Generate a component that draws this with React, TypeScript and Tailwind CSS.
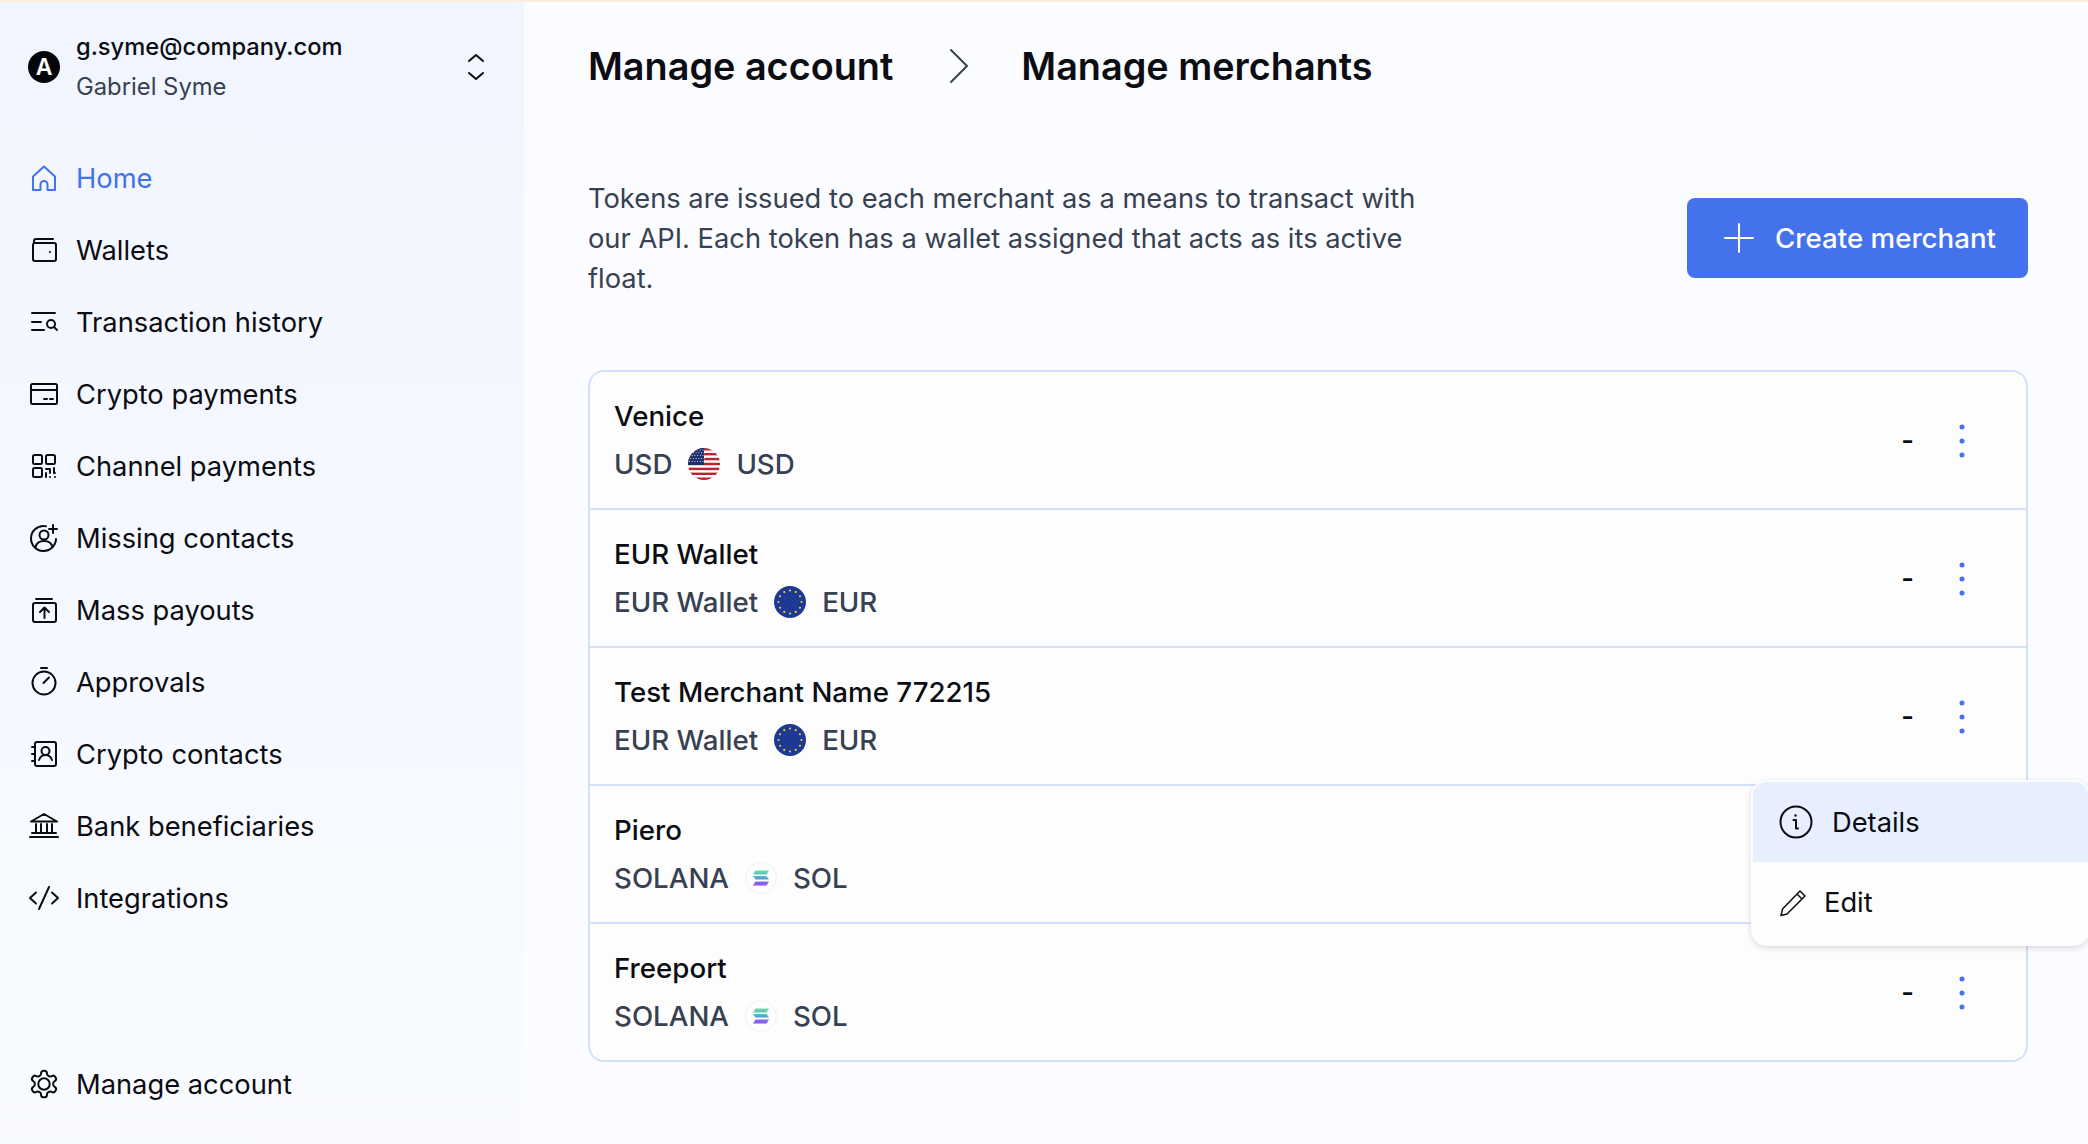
import React from "react";

const S = ({ children, color = "#0b0d12" }: { children: React.ReactNode; color?: string }) => (
  <svg width="32" height="32" viewBox="0 0 32 32" fill="none" stroke={color} strokeWidth="2" strokeLinecap="round" strokeLinejoin="round" className="shrink-0">
    {children}
  </svg>
);

const icons: Record<string, React.ReactNode> = {
  home: <path d="M5 14.5 16 4.5l11 10V28h-7.5v-5.5a3.5 3.5 0 0 0-7 0V28H5z" />,
  wallet: (
    <>
      <rect x="5" y="9" width="23" height="18" rx="2" />
      <path d="M6 9V7a2 2 0 0 1 2-2h17" />
      <circle cx="22" cy="18" r="1" fill="#0b0d12" stroke="none" />
    </>
  ),
  tx: (
    <>
      <path d="M4 7h23M4 16h9M4 24h12" />
      <circle cx="23" cy="18" r="4" />
      <path d="m26 21 3 3" />
    </>
  ),
  card: (
    <>
      <rect x="3" y="6" width="26" height="20" rx="1.5" />
      <path d="M3 12h26M16 21h3M22 21h3" />
    </>
  ),
  qr: (
    <>
      <rect x="5" y="5" width="9" height="9" rx="1.5" />
      <rect x="18" y="5" width="9" height="9" rx="1.5" />
      <rect x="5" y="18" width="9" height="9" rx="1.5" />
      <path d="M18 19h4v4M18 23v4M22 27h0M26 18v5h1M27 27h0" />
    </>
  ),
  contact: (
    <>
      <path d="M28 17A12.5 12.5 0 1 1 16 4a12 12 0 0 1 2 .2" />
      <circle cx="16" cy="13" r="4.5" />
      <path d="M7.5 25c1-4 4.500-6 8.500-6s7.500 2 8.500 6M25 3v8M21 7h8" />
    </>
  ),
  payout: (
    <>
      <path d="M8 5h16" />
      <rect x="5" y="9" width="23" height="19" rx="2" />
      <path d="M16.500 24V14M12 18l4.500-4.500L21 18" />
    </>
  ),
  timer: (
    <>
      <circle cx="16" cy="17" r="11.500" />
      <path d="M13 2h6M15.500 17l5.500-5.500" />
    </>
  ),
  book: (
    <>
      <rect x="7" y="4" width="21" height="24" rx="2" />
      <path d="M4 9h3M4 16h3M4 23h3" />
      <circle cx="17.500" cy="13" r="4" />
      <path d="M11 22c1-3 3.500-5 6.500-5s5.500 2 6.500 5" />
    </>
  ),
  bank: (
    <>
      <path d="M3 11.500 16 4l13 7.500z" />
      <path d="M8 14v8M13 14v8M19 14v8M24 14v8M4 23h24M2 27h28" />
    </>
  ),
  code: <path d="M8 10.500 2 16l6 5.500M24 10.500l6 5.500-6 5.500M21 5l-10 22" />,
};

const GEAR =
  "M12.22 2h-.44a2 2 0 0 0-2 2v.18a2 2 0 0 1-1 1.73l-.43.25a2 2 0 0 1-2 0l-.15-.08a2 2 0 0 0-2.73.73l-.22.38a2 2 0 0 0 .73 2.73l.15.1a2 2 0 0 1 1 1.72v.51a2 2 0 0 1-1 1.74l-.15.09a2 2 0 0 0-.73 2.73l.22.38a2 2 0 0 0 2.73.73l.15-.08a2 2 0 0 1 2 0l.43.25a2 2 0 0 1 1 1.73V20a2 2 0 0 0 2 2h.44a2 2 0 0 0 2-2v-.18a2 2 0 0 1 1-1.73l.43-.25a2 2 0 0 1 2 0l.15.08a2 2 0 0 0 2.73-.73l.22-.39a2 2 0 0 0-.73-2.73l-.15-.08a2 2 0 0 1-1-1.74v-.5a2 2 0 0 1 1-1.74l.15-.09a2 2 0 0 0 .73-2.73l-.22-.38a2 2 0 0 0-2.73-.73l-.15.08a2 2 0 0 1-2 0l-.43-.25a2 2 0 0 1-1-1.73V4a2 2 0 0 0-2-2z";

const Gear = () => (
  <svg width="32" height="32" viewBox="0 0 24 24" fill="none" stroke="#0b0d12" strokeWidth="1.5" strokeLinecap="round" strokeLinejoin="round" className="shrink-0">
    <path d={GEAR} />
    <circle cx="12" cy="12" r="4.300" />
  </svg>
);

const nav = [
  ["home", "Home"],
  ["wallet", "Wallets"],
  ["tx", "Transaction history"],
  ["card", "Crypto payments"],
  ["qr", "Channel payments"],
  ["contact", "Missing contacts"],
  ["payout", "Mass payouts"],
  ["timer", "Approvals"],
  ["book", "Crypto contacts"],
  ["bank", "Bank beneficiaries"],
  ["code", "Integrations"],
];

const Usa = () => {
  const stripes = [];
  for (let i = 0; i < 7; i++) stripes.push(<rect key={i} x="0" y={i * 4.92} width="32" height="2.460" fill="#b92535" />);
  const dots = [];
  for (let r = 0; r < 5; r++) for (let c = 0; c < 6; c++) dots.push(<circle key={`${r}${c}`} cx={1.500 + c * 2.700 + (r % 2) * 1.200} cy={2 + r * 2.800} r="0.500" fill="#fff" />);
  return (
    <svg width="32" height="32" viewBox="0 0 32 32" className="shrink-0">
      <clipPath id="usa"><circle cx="16" cy="16" r="16" /></clipPath>
      <g clipPath="url(#usa)">
        <rect width="32" height="32" fill="#fff" />
        {stripes}
        <rect width="16" height="17" fill="#20306f" />
        {dots}
      </g>
    </svg>
  );
};

const Eur = () => {
  const stars = [];
  for (let i = 0; i < 12; i++) {
    const a = (i * Math.PI) / 6;
    stars.push(<circle key={i} cx={16 + 11.500 * Math.cos(a)} cy={16 + 11.500 * Math.sin(a)} r="1.100" fill="#f2c832" />);
  }
  return (
    <svg width="32" height="32" viewBox="0 0 32 32" className="shrink-0">
      <circle cx="16" cy="16" r="16" fill="#1c3a94" />
      {stars}
    </svg>
  );
};

const Sol = () => (
  <svg width="32" height="32" viewBox="0 0 32 32" className="shrink-0">
    <defs>
      <linearGradient id="sol" x1="0" y1="0" x2="0" y2="1">
        <stop offset="0" stopColor="#5fe3a8" />
        <stop offset="0.5" stopColor="#58a8c8" />
        <stop offset="1" stopColor="#9945ff" />
      </linearGradient>
    </defs>
    <circle cx="16" cy="16" r="15.500" fill="#fdfdfe" stroke="#eef0f6" />
    <path fill="url(#sol)" d="M10.500 8.500h13.500l-2.500 4H8zM8 14h13.500l2.500 3.600H10.500zM10.500 19.500H24L21.500 23.500H8z" />
  </svg>
);

const Dots = () => (
  <svg width="32" height="36" viewBox="0 0 32 36" className="shrink-0" fill="#4472ec">
    <circle cx="16" cy="4" r="2.500" />
    <circle cx="16" cy="18" r="2.500" />
    <circle cx="16" cy="32" r="2.500" />
  </svg>
);

const rows: [string, string, React.ReactNode, string][] = [
  ["Venice", "USD", <Usa />, "USD"],
  ["EUR Wallet", "EUR Wallet", <Eur />, "EUR"],
  ["Test Merchant Name 772215", "EUR Wallet", <Eur />, "EUR"],
  ["Piero", "SOLANA", <Sol />, "SOL"],
  ["Freeport", "SOLANA", <Sol />, "SOL"],
];

export default function App() {
  return (
    <div className="flex h-[1144px] w-full flex-col overflow-hidden bg-[#fbfcff] text-[27.3px] text-[#0b0d12] font-['Inter',sans-serif]">
      <div className="h-[2px] shrink-0 bg-[#fdeedc]" />
      <div className="relative flex min-h-0 flex-1">
        <aside className="flex w-[524px] shrink-0 flex-col bg-gradient-to-b from-[#f1f5ff] to-[#f9fbff] pb-[24px]">
          <div className="flex h-[140px] shrink-0 items-start pl-[28px] pr-[36px] pt-[25px]">
            <div className="flex h-[80px] w-full items-center justify-between">
              <div className="flex items-center gap-[16px]">
                <div className="flex h-[32px] w-[32px] items-center justify-center rounded-full bg-[#05060a] text-[23px] font-semibold leading-none text-white">A</div>
                <div>
                  <div className="text-[23.7px] font-medium leading-[40px]">g.syme@company.com</div>
                  <div className="text-[23.8px] leading-[40px] text-[#374151]">Gabriel Syme</div>
                </div>
              </div>
              <svg width="24" height="32" viewBox="0 0 24 32" fill="none" stroke="#0b0d12" strokeWidth="2" strokeLinecap="round" strokeLinejoin="round">
                <path d="m5 10 7-6 7 6M5 22l7 6 7-6" />
              </svg>
            </div>
          </div>
          <nav className="flex flex-col">
            {nav.map(([k, label], i) => (
              <div key={k} className={`flex h-[72px] items-center gap-[16px] pl-[28px] ${i === 0 ? "text-[#4472ec]" : ""}`}>
                <S color={i === 0 ? "#4472ec" : "#0b0d12"}>{icons[k]}</S>
                <span className="pt-[2px]">{label}</span>
              </div>
            ))}
          </nav>
          <div className="mt-auto flex h-[72px] items-center gap-[16px] pl-[28px]">
            <Gear />
            <span className="pt-[2px]">Manage account</span>
          </div>
        </aside>

        <main className="min-w-0 flex-1 pl-[64px] pr-[60px] pt-[32px]">
          <div className="flex h-[64px] items-center text-[37.8px] font-semibold">
            <span>Manage account</span>
            <svg width="32" height="40" viewBox="0 0 32 40" fill="none" stroke="#374151" strokeWidth="2" strokeLinecap="round" strokeLinejoin="round" className="ml-[51px] mr-[45px]">
              <path d="m7 4 16 16L7 36" />
            </svg>
            <span>Manage merchants</span>
          </div>

          <div className="mt-[80px] flex items-center justify-between">
            <p className="-mb-[1px] w-[850px] pt-[1px] leading-[40px] text-[#374151]">
              Tokens are issued to each merchant as a means to transact with our API. Each token has a wallet assigned that acts as its active float.
            </p>
            <button className="flex h-[80px] w-[341px] items-center gap-[21px] rounded-[8px] bg-[#4472ec] pl-[37px] text-[27.7px] font-medium text-white">
              <svg width="30" height="30" viewBox="0 0 30 30" fill="none" stroke="#fff" strokeWidth="2" strokeLinecap="round">
                <path d="M15 1v28M1 15h28" />
              </svg>
              <span className="pt-[2px]">Create merchant</span>
            </button>
          </div>

          <div className="mt-[72px] divide-y-2 divide-[#d3e0fd] rounded-[16px] border-2 border-[#d3e0fd] bg-[#fdfdfe]">
            {rows.map(([title, sub, flag, cur]) => (
              <div key={title} className="flex h-[138px] items-center justify-between pl-[24px] pr-[48px] last:h-[136px]">
                <div className="text-[27.7px] font-medium leading-[48px]">
                  <div>{title}</div>
                  <div className="flex items-center gap-[16px] text-[#374151]">
                    <span>{sub}</span>
                    {flag}
                    <span>{cur}</span>
                  </div>
                </div>
                <div className="flex items-center gap-[32px] pt-[2px]">
                  <span className="font-semibold">-</span>
                  <Dots />
                </div>
              </div>
            ))}
          </div>
        </main>

        <div className="absolute -right-[2px] top-[778px] w-[339px] overflow-hidden rounded-[16px] border-2 border-[#fdfdfe] bg-[#fdfdfe] shadow-[0_2px_6px_rgba(0,0,0,0.14)]">
          <div className="flex h-[80px] items-center gap-[19px] bg-[#e7eefd] pl-[26px]">
            <svg width="34" height="34" viewBox="0 0 34 34" fill="none" stroke="#0b0d12" strokeWidth="2" strokeLinecap="round" strokeLinejoin="round">
              <circle cx="17" cy="17" r="15.500" />
              <path d="M14.500 15H17v8.500h2" />
              <circle cx="16.500" cy="10.500" r="1.200" fill="#0b0d12" stroke="none" />
            </svg>
            <span className="pt-[2px]">Details</span>
          </div>
          <div className="flex h-[82px] items-center gap-[17px] pl-[26px]">
            <svg width="28" height="28" viewBox="0 0 28 28" fill="none" stroke="#0b0d12" strokeWidth="1.500" strokeLinecap="round" strokeLinejoin="round">
              <path d="M21 2 26 7 8 25l-6 1.500L3.500 20zM18 5l5 5" />
            </svg>
            <span>Edit</span>
          </div>
        </div>
      </div>
    </div>
  );
}
